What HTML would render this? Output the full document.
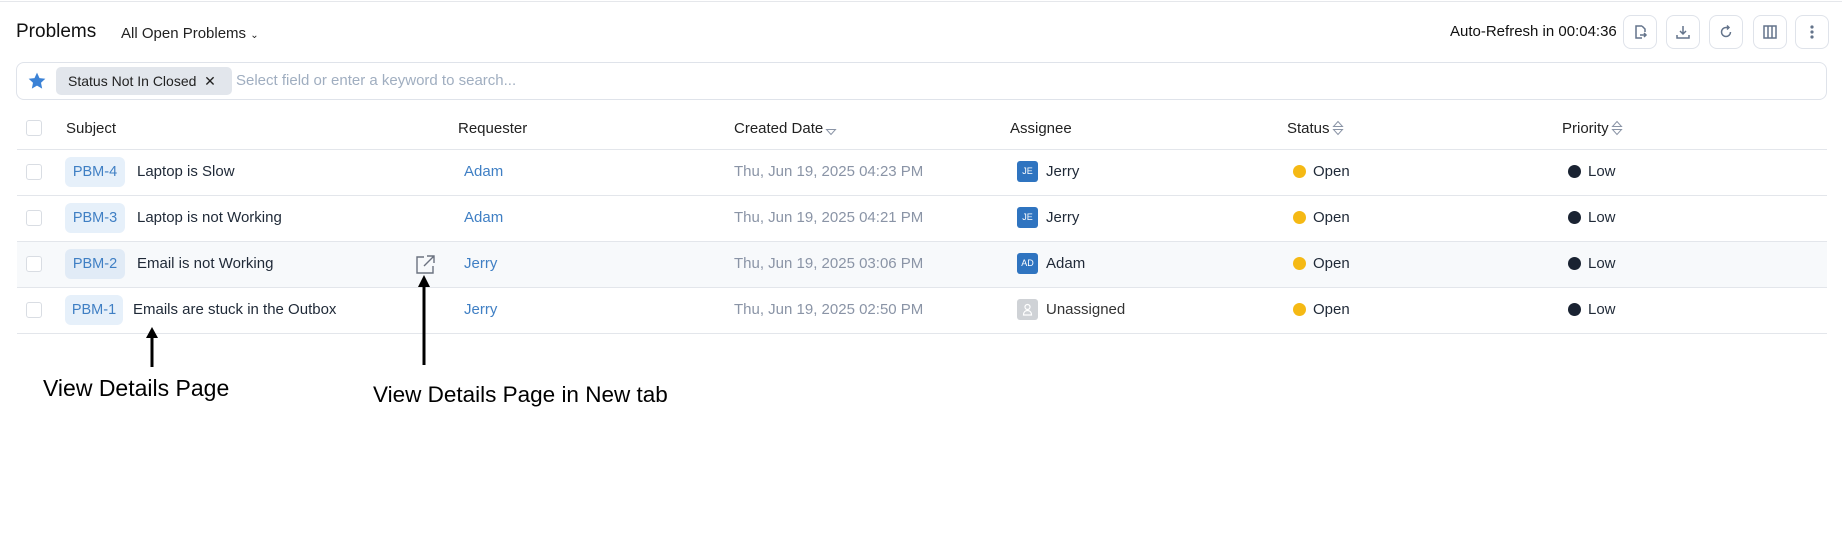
<!DOCTYPE html>
<html><head><meta charset="utf-8"><style>
*{box-sizing:border-box;margin:0;padding:0}
body{width:1842px;height:533px;background:#fff;font-family:"Liberation Sans",sans-serif;color:#1f2937;position:relative;overflow:hidden}
.a{position:absolute;white-space:nowrap}
.btn{position:absolute;top:15px;width:34px;height:34px;border:1px solid #dfe3ea;border-radius:8px;display:flex;align-items:center;justify-content:center}
.line{position:absolute;left:17px;width:1810px;height:1px;background:#e3e6eb}
.cb{position:absolute;left:26px;width:16px;height:16px;border:1px solid #d9dde3;border-radius:3px;background:#fff}
.badge{position:absolute;left:65px;height:30px;width:60px;text-align:center;background:#e6f0fa;color:#3f7fc4;border-radius:6px;font-size:14.5px;line-height:30px}
.t{font-size:15px;position:absolute;white-space:nowrap;line-height:18px}
.av{position:absolute;left:1017px;width:21px;height:21px;border-radius:3px;background:#2f74c0;color:#fff;font-size:9px;line-height:21px;text-align:center}
.dot{position:absolute;width:13px;height:13px;border-radius:50%}
.h{font-size:15px;position:absolute;top:120px;color:#222}
.srt{display:inline-block;vertical-align:-3px;margin-left:2px}
</style></head><body>
<div class="a" style="left:0;top:1px;width:1842px;height:1px;background:#e5e7eb"></div>
<div class="a" style="left:16px;top:21px;font-size:19px;color:#111">Problems</div>
<div class="a" style="left:121px;top:25px;font-size:15px;color:#222">All Open Problems <span style="font-size:10px">&#8964;</span></div>
<div class="a" style="left:1450px;top:23px;font-size:15px;color:#111">Auto-Refresh in 00:04:36</div>
<div class="btn" style="left:1623px"><svg width="16" height="16" viewBox="0 0 16 16" fill="none" stroke="#64748b" stroke-width="1.5"><path d="M10 2H4v12h6M10 2l3 3v3M8 11h6M12 9l2 2-2 2"/></svg></div>
<div class="btn" style="left:1666px"><svg width="16" height="16" viewBox="0 0 16 16" fill="none" stroke="#64748b" stroke-width="1.5"><path d="M8 2v8M5 7l3 3 3-3M2 11v3h12v-3"/></svg></div>
<div class="btn" style="left:1709px"><svg width="16" height="16" viewBox="0 0 16 16" fill="none" stroke="#64748b" stroke-width="1.5"><path d="M12.5 8A4.5 4.5 0 1 1 8 3.5h2M9 1.5l2 2-2 2"/></svg></div>
<div class="btn" style="left:1753px"><svg width="16" height="16" viewBox="0 0 16 16" fill="none" stroke="#64748b" stroke-width="1.5"><rect x="2" y="2" width="12" height="12"/><path d="M6 2v12M10 2v12"/></svg></div>
<div class="btn" style="left:1795px"><svg width="16" height="16" viewBox="0 0 16 16" fill="#64748b"><circle cx="8" cy="3" r="1.6"/><circle cx="8" cy="8" r="1.6"/><circle cx="8" cy="13" r="1.6"/></svg></div>

<div class="a" style="left:16px;top:62px;width:1811px;height:38px;border:1px solid #dfe3ea;border-radius:8px"></div>
<svg class="a" style="left:27px;top:71px" width="20" height="20" viewBox="0 0 24 24"><path fill="#3b82d6" d="M12 2l3 6.5 7 .8-5.2 4.8 1.4 7L12 17.6 5.8 21.1l1.4-7L2 9.3l7-.8z"/></svg>
<div class="a" style="left:56px;top:67px;height:28px;width:176px;background:#e2e6ec;border-radius:5px;font-size:14px;line-height:28px;padding-left:12px;color:#222">Status Not In Closed &nbsp;&#10005;</div>
<div class="a" style="left:236px;top:72px;font-size:15px;color:#a0aec0">Select field or enter a keyword to search...</div>

<div class="cb" style="top:120px"></div>
<div class="h" style="left:66px">Subject</div>
<div class="h" style="left:458px">Requester</div>
<div class="h" style="left:734px">Created Date<svg class="srt" width="12" height="14" viewBox="0 0 12 14" fill="none" stroke="#8a94a6" stroke-width="1"><path d="M1.5 7.5h9L6 12.5z"/></svg></div>
<div class="h" style="left:1010px">Assignee</div>
<div class="h" style="left:1287px">Status<svg class="srt" width="12" height="16" viewBox="0 0 12 16" fill="none" stroke="#8a94a6" stroke-width="1"><path d="M1.5 6.5h9L6 1.5zM1.5 9.5h9L6 14.5z"/></svg></div>
<div class="h" style="left:1562px">Priority<svg class="srt" width="12" height="16" viewBox="0 0 12 16" fill="none" stroke="#8a94a6" stroke-width="1"><path d="M1.5 6.5h9L6 1.5zM1.5 9.5h9L6 14.5z"/></svg></div>

<div class="a" style="left:17px;top:242px;width:1810px;height:45px;background:#f7f9fb"></div>
<div class="line" style="top:149px"></div><div class="line" style="top:195px"></div><div class="line" style="top:241px"></div><div class="line" style="top:287px"></div><div class="line" style="top:333px"></div>

<div class="cb" style="top:164px"></div><div class="badge" style="top:157px">PBM-4</div><div class="t" style="left:137px;top:163px">Laptop is Slow</div>
<div class="t" style="left:464px;top:163px;color:#3f7fc4">Adam</div><div class="t" style="left:734px;top:163px;color:#8a94a6">Thu, Jun 19, 2025 04:23 PM</div>
<div class="av" style="top:161px">JE</div><div class="t" style="left:1046px;top:163px">Jerry</div>

<div class="cb" style="top:210px"></div><div class="badge" style="top:203px">PBM-3</div><div class="t" style="left:137px;top:209px">Laptop is not Working</div>
<div class="t" style="left:464px;top:209px;color:#3f7fc4">Adam</div><div class="t" style="left:734px;top:209px;color:#8a94a6">Thu, Jun 19, 2025 04:21 PM</div>
<div class="av" style="top:207px">JE</div><div class="t" style="left:1046px;top:209px">Jerry</div>

<div class="cb" style="top:256px"></div><div class="badge" style="top:249px;background:#e1ebf6">PBM-2</div><div class="t" style="left:137px;top:255px">Email is not Working</div>
<svg class="a" style="left:416px;top:255px" width="19" height="19" viewBox="0 0 19 19" fill="none" stroke="#6b7280" stroke-width="1.4"><path d="M8 2H1v16h16v-7M11 1h7v7M18 1L8 11"/></svg>
<div class="t" style="left:464px;top:255px;color:#3f7fc4">Jerry</div><div class="t" style="left:734px;top:255px;color:#8a94a6">Thu, Jun 19, 2025 03:06 PM</div>
<div class="av" style="top:253px">AD</div><div class="t" style="left:1046px;top:255px">Adam</div>

<div class="cb" style="top:302px"></div><div class="badge" style="top:295px;width:58px">PBM-1</div><div class="t" style="left:133px;top:301px">Emails are stuck in the Outbox</div>
<div class="t" style="left:464px;top:301px;color:#3f7fc4">Jerry</div><div class="t" style="left:734px;top:301px;color:#8a94a6">Thu, Jun 19, 2025 02:50 PM</div>
<div class="av" style="top:299px;background:#cfd2d6"><svg width="21" height="21" viewBox="0 0 21 21" fill="none" stroke="#fff" stroke-width="1.2"><circle cx="10.5" cy="8" r="2.5"/><path d="M6.5 16c0-3 1.8-4.5 4-4.5s4 1.5 4 4.5z"/></svg></div><div class="t" style="left:1046px;top:301px;color:#333">Unassigned</div>

<div class="dot" style="left:1293px;top:165px;background:#f5b914"></div><div class="t" style="left:1313px;top:163px">Open</div>
<div class="dot" style="left:1293px;top:211px;background:#f5b914"></div><div class="t" style="left:1313px;top:209px">Open</div>
<div class="dot" style="left:1293px;top:257px;background:#f5b914"></div><div class="t" style="left:1313px;top:255px">Open</div>
<div class="dot" style="left:1293px;top:303px;background:#f5b914"></div><div class="t" style="left:1313px;top:301px">Open</div>
<div class="dot" style="left:1568px;top:165px;background:#1a2332"></div><div class="t" style="left:1588px;top:163px">Low</div>
<div class="dot" style="left:1568px;top:211px;background:#1a2332"></div><div class="t" style="left:1588px;top:209px">Low</div>
<div class="dot" style="left:1568px;top:257px;background:#1a2332"></div><div class="t" style="left:1588px;top:255px">Low</div>
<div class="dot" style="left:1568px;top:303px;background:#1a2332"></div><div class="t" style="left:1588px;top:301px">Low</div>

<svg class="a" style="left:0;top:0" width="1842" height="533"><path d="M152 367V336" stroke="#000" stroke-width="3"/><path d="M146 338l6-11 6 11z" fill="#000"/><path d="M424 365V285" stroke="#000" stroke-width="3"/><path d="M418 287l6-12 6 12z" fill="#000"/></svg>
<div class="a" style="left:43px;top:375px;font-size:23px;color:#000">View Details Page</div>
<div class="a" style="left:373px;top:382px;font-size:22.5px;color:#000">View Details Page in New tab</div>
</body></html>
